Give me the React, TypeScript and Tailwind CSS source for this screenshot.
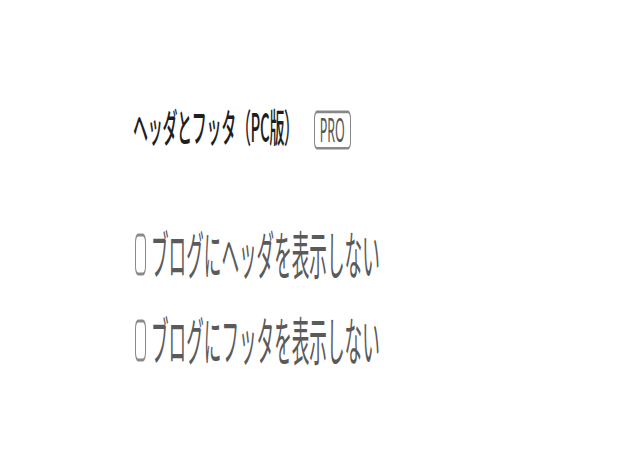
const jp = { fontFamily: '"Noto Sans CJK JP", "Noto Sans", sans-serif' };

function Option({ label }: { label: string }) {
  return (
    <div className="h-[86px] flex items-center">
      <span className="inline-flex items-center scale-y-[3] leading-none text-[17.6px] font-normal text-[#5a5a5a]" style={jp}>
        <span className="inline-block w-[11px] h-[14px] border-[1.5px] border-[#8a8a8a] rounded-[3px] ml-[2px] mr-[5px]" />
        <span>{label}</span>
      </span>
    </div>
  );
}

export default function App() {
  return (
    <div className="w-[640px] h-[470px] bg-white pt-[104px] pl-[133px]">
      <div className="h-[40px] flex items-center">
        <span className="inline-flex items-center scale-y-[2.6] leading-none" style={jp}>
          <span className="text-[15px] font-medium text-[#1e1e1e] tracking-[-0.3px]">ヘッダとフッタ（PC版）</span>
          <span className="ml-[15px] mt-[4px] inline-flex items-start justify-center w-[37px] h-[14.5px] pt-[1px] border border-[#888] rounded-[3px] text-[12.5px] leading-none text-[#555]" style={{ fontFamily: '"Noto Sans", sans-serif' }}>
            PRO
          </span>
        </span>
      </div>
      <div className="mt-[67px]">
        <Option label="ブログにヘッダを表示しない" />
        <Option label="ブログにフッタを表示しない" />
      </div>
    </div>
  );
}
